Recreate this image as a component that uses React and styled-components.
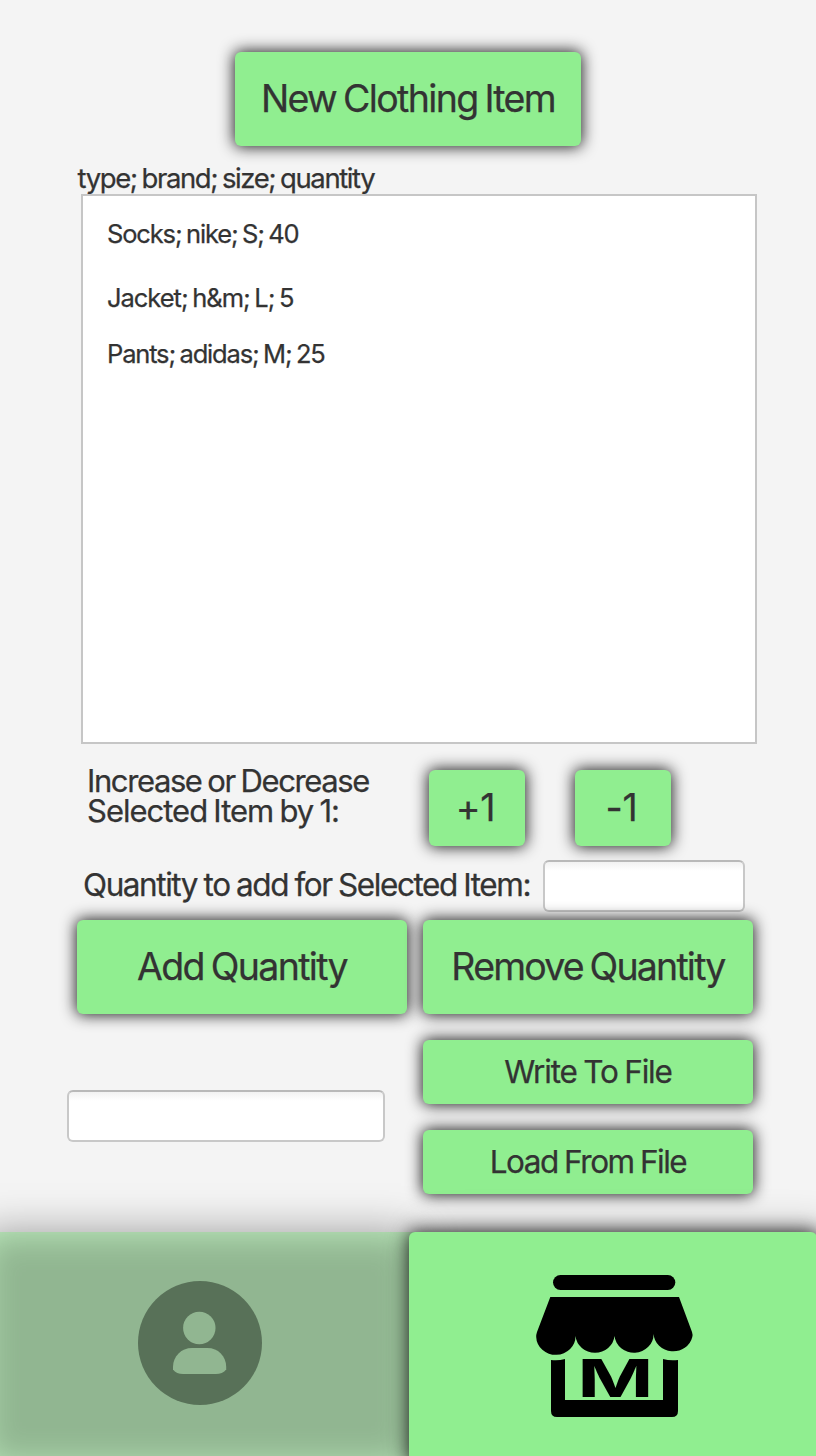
import React from "react";
import styled, { createGlobalStyle } from "styled-components";

const GlobalStyle = createGlobalStyle`
  * { box-sizing: border-box; }
  body { margin: 0; background: #f4f4f4; }
  button, input { font: inherit; color: inherit; }
`;

const Screen = styled.div`
  width: 816px;
  height: 1456px;
  overflow: hidden;
  display: flex;
  flex-direction: column;
  background: #f4f4f4;
  color: #333;
  font-family: Inter, "Liberation Sans", sans-serif;
  -webkit-text-stroke: 0.25px #333;
`;

const Content = styled.main`
  height: 1232px;
  display: flex;
  flex-direction: column;
`;

const Button = styled.button`
  flex: none;
  width: ${(p) => p.$w}px;
  height: ${(p) => p.$h}px;
  padding: 0 ${(p) => p.$inset || 0}px 0 0;
  border: 0;
  border-radius: 6px;
  background: #90ee90;
  box-shadow: 0 0 15px 1px rgba(0, 0, 0, 0.88);
  font-size: ${(p) => p.$size || 37.5}px;
  letter-spacing: ${(p) => p.$track || -1.65}px;
  word-spacing: ${(p) => p.$word || -2}px;
  line-height: ${(p) => p.$h}px;
  white-space: nowrap;
`;

const Header = styled.header`
  display: flex;
  justify-content: center;
  padding-top: 52px;
`;

const Caption = styled.div`
  margin: 14px 0 0 77.5px;
  height: 34px;
  line-height: 37px;
  font-size: 27.5px;
  letter-spacing: -1.4px;
  word-spacing: -1.5px;
`;

const List = styled.ul`
  flex: none;
  width: 676px;
  height: 550px;
  margin: 0 0 0 81px;
  padding: 8px 24px;
  list-style: none;
  border: 2px solid #c6c6c6;
  background: #fff;
`;

const Item = styled.li`
  height: ${(p) => p.$h}px;
  line-height: ${(p) => p.$h}px;
  font-size: 25.5px;
  letter-spacing: ${(p) => p.$track}px;
  word-spacing: -1.5px;
`;

const StepRow = styled.section`
  display: flex;
  height: 102px;
  padding: 26px 0 0 87px;
`;

const StepLabel = styled.div`
  width: 342px;
  margin-top: -4px;
  font-size: 31px;
  line-height: 30px;
  word-spacing: -1.5px;
`;

const StepLine = styled.span`
  letter-spacing: ${(p) => p.$track}px;
`;

const StepButtons = styled.div`
  display: flex;
  gap: 50px;
`;

const QuantityRow = styled.label`
  display: flex;
  height: 74px;
  padding: 14px 0 0 83px;
`;

const QuantityLabel = styled.span`
  width: 460px;
  line-height: 50px;
  font-size: 31.5px;
  letter-spacing: -1.43px;
  word-spacing: -1px;
  white-space: nowrap;
`;

const Field = styled.input`
  flex: none;
  width: ${(p) => p.$w}px;
  height: 52px;
  padding: 0 12px;
  border: 2px solid #c8c8c8;
  border-top-color: #b9b9b9;
  border-radius: 6px;
  background: linear-gradient(#f2f2f2, #fff 9px);
  font-size: 25px;
  outline: none;
`;

const Actions = styled.section`
  display: flex;
  gap: 16px;
  padding-left: 77px;
`;

const FileRow = styled.section`
  display: flex;
  padding: 26px 0 0 67px;
`;

const FileField = styled.div`
  width: 356px;
  padding-top: 50px;
`;

const FileButtons = styled.div`
  display: flex;
  flex-direction: column;
  gap: 26px;
`;

const Nav = styled.nav`
  display: flex;
  height: 224px;
  margin-right: -1px;
`;

const Tab = styled.button`
  flex: none;
  display: flex;
  justify-content: center;
  height: 224px;
  border: 0;
  padding: 0;
`;

const ProfileTab = styled(Tab)`
  width: 433px;
  height: 234px;
  margin: 0 -6px 0 -18px;
  padding: 49px 0 0 3px;
  background: #91b691;
  box-shadow: 0 0 40px rgba(0, 0, 0, 0.36), inset 0 0 36px #c6f4c6;
`;

const StoreTab = styled(Tab)`
  position: relative;
  width: 408px;
  height: 232px;
  padding: 42px 0 0 3px;
  border-radius: 6px;
  background: #90ee90;
  box-shadow: 0 0 18px 1px rgba(0, 0, 0, 0.8), 14px 0 40px rgba(0, 0, 0, 0.3);
`;

const ProfileIcon = () => (
  <svg width="124" height="124" viewBox="138 1281 124 124">
    <circle cx="200" cy="1343" r="62" fill="#587158" />
    <g fill="#91b691">
      <circle cx="199.3" cy="1328" r="16.2" />
      <path d="M173 1369.5V1367C173 1356 181.500 1348 192 1348H207.500C218 1348 226.200 1356 226.200 1367V1369.500C224 1372.500 220 1374 216 1374H183C179 1374 175 1372.500 173 1369.500Z" />
    </g>
  </svg>
);

const StoreIcon = () => (
  <svg width="158" height="144" viewBox="536 1274 158 144">
    <rect x="553" y="1275" width="122.300" height="15" rx="7.500" />
    <path d="M550.300 1297H679L692 1332Q693 1335 692.300 1337A19.600 18.300 0 0 1 653.600 1334A19.600 18.600 0 0 1 614.500 1336A19.600 18.600 0 0 1 575.500 1336A19.600 18.300 0 0 1 536.200 1337Q536 1335 537 1332Z" />
    <path d="M551 1360Q558 1361 565 1359V1400H663V1359Q670 1361 678 1360V1411Q678 1417 672 1417H557Q551 1417 551 1411Z" />
    <text
      transform="translate(615.500 1397) scale(1.560 1)"
      textAnchor="middle"
      fontFamily="Inter, sans-serif"
      fontWeight="700"
      fontSize="52.500"
      stroke="none"
    >
      M
    </text>
  </svg>
);

export default function App() {
  return (
    <Screen>
      <GlobalStyle />
      <Content>
        <Header>
          <Button $w={346} $h={94}>New Clothing Item</Button>
        </Header>
        <Caption>type; brand; size; quantity</Caption>
        <List>
          <Item $h={60} $track={-1.15}>Socks; nike; S; 40</Item>
          <Item $h={68} $track={-1.03}>Jacket; h&amp;m; L; 5</Item>
          <Item $h={44} $track={-1.16}>Pants; adidas; M; 25</Item>
        </List>
        <StepRow>
          <StepLabel>
            <StepLine $track={-1.4}>Increase or Decrease</StepLine>
            <br />
            <StepLine $track={-1}>Selected Item by 1:</StepLine>
          </StepLabel>
          <StepButtons>
            <Button $w={96} $h={76} $track={-0.3} $inset={3}>+1</Button>
            <Button $w={96} $h={76} $track={-0.3} $inset={3}>-1</Button>
          </StepButtons>
        </StepRow>
        <QuantityRow>
          <QuantityLabel>Quantity to add for Selected Item:</QuantityLabel>
          <Field $w={202} />
        </QuantityRow>
        <Actions>
          <Button $w={330} $h={94} $track={-1.65}>Add Quantity</Button>
          <Button $w={330} $h={94} $track={-1.8}>Remove Quantity</Button>
        </Actions>
        <FileRow>
          <FileField>
            <Field $w={318} aria-label="File name" />
          </FileField>
          <FileButtons>
            <Button $w={330} $h={64} $size={31.5} $track={-1.2} $word={-1}>Write To File</Button>
            <Button $w={330} $h={64} $size={31.5} $track={-1.5} $word={-1}>Load From File</Button>
          </FileButtons>
        </FileRow>
      </Content>
      <Nav>
        <ProfileTab aria-label="Profile"><ProfileIcon /></ProfileTab>
        <StoreTab aria-label="Store"><StoreIcon /></StoreTab>
      </Nav>
    </Screen>
  );
}
